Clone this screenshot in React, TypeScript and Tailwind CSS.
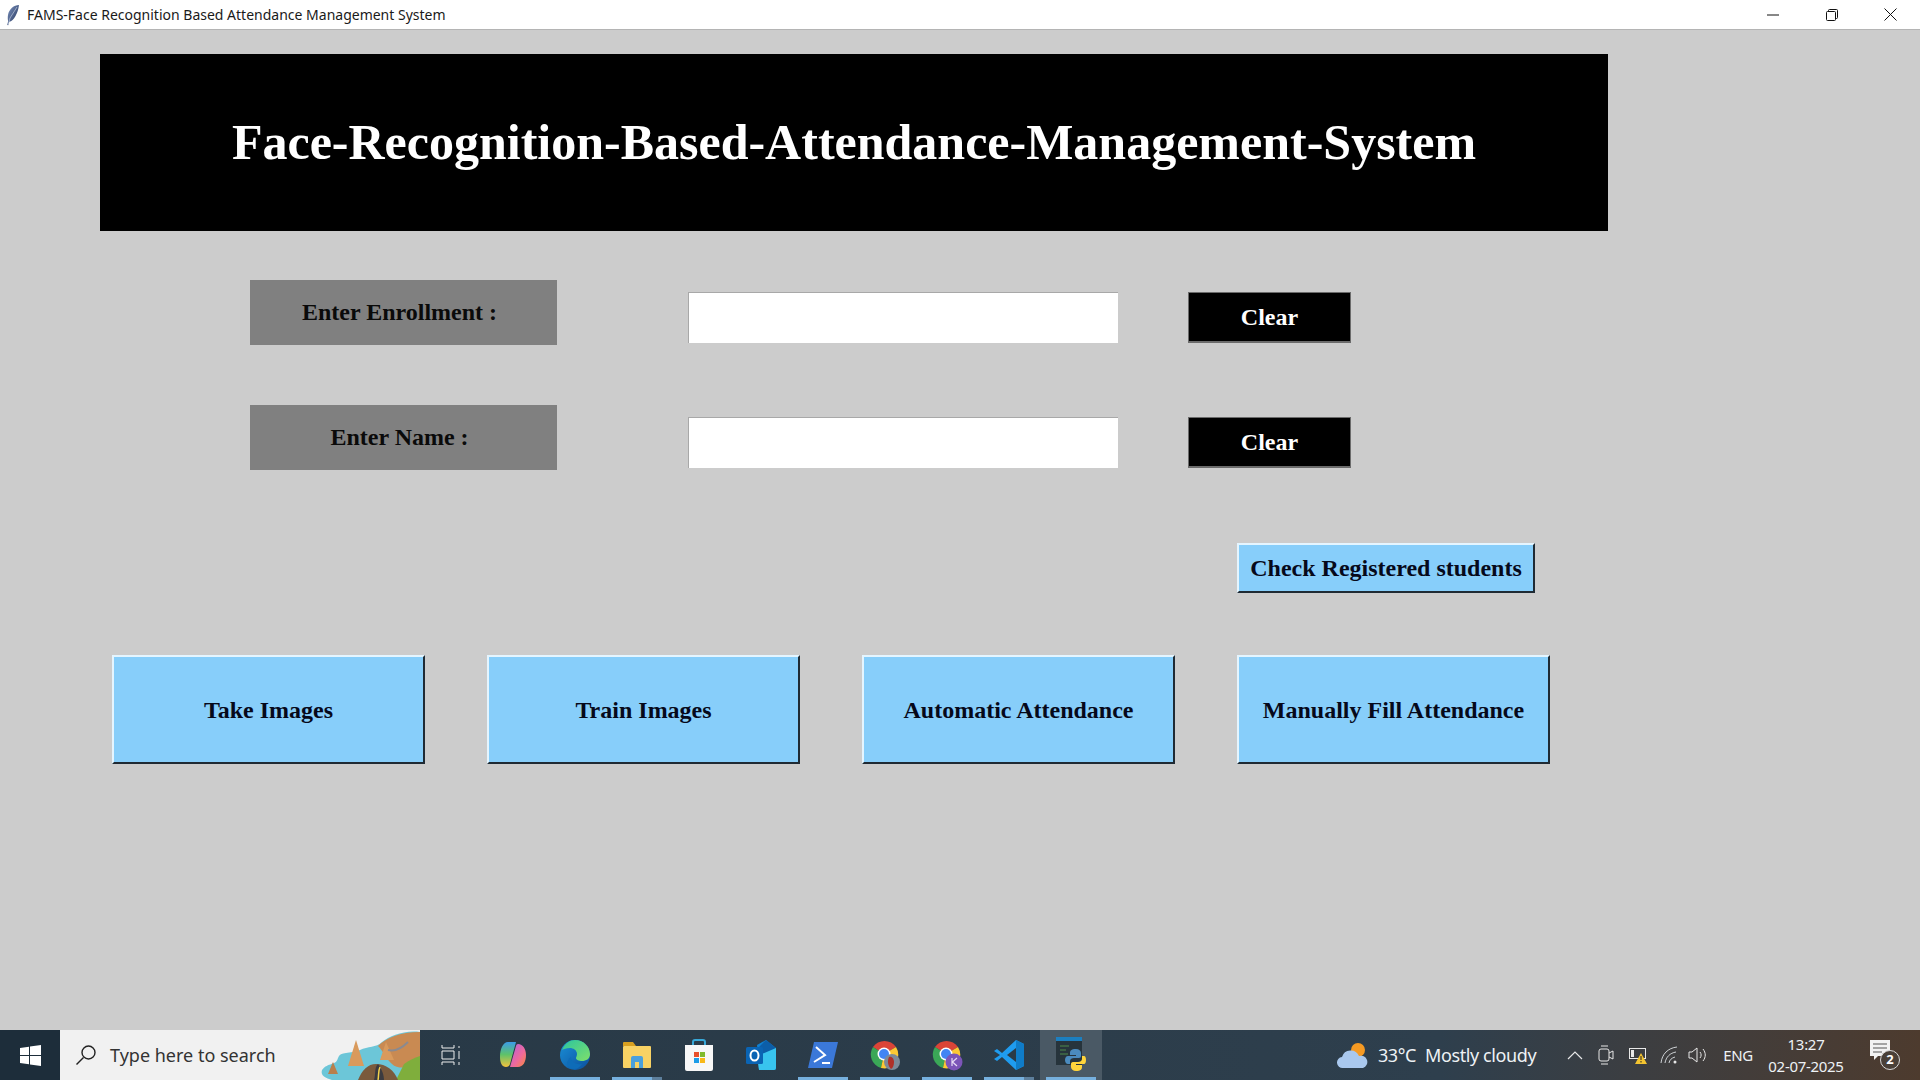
import { ReactNode } from "react";

function FeatherIcon() {
  return (
    <svg width="14" height="22" viewBox="0 0 14 22">
      <defs>
        <linearGradient id="feather" x1="0" y1="0" x2="1" y2="1">
          <stop offset="0" stopColor="#7f97c4" />
          <stop offset="1" stopColor="#1d2c52" />
        </linearGradient>
      </defs>
      <path d="M13 1C8 1 3 5 2 11c-.4 2.600-.3 4.500.2 6l-1 4 1 .2 1-3.400C8 17 12 9 13 1z" fill="url(#feather)" />
      <path d="M11 3 4 14 2.500 20" stroke="#cfd8ea" strokeWidth=".6" fill="none" />
    </svg>
  );
}

function TitleBar() {
  return (
    <div className="flex h-[30px] items-center bg-white border-b border-[#b4b4b4] pl-[6px]">
      <FeatherIcon />
      <span className="ml-[7px] text-[14px] text-[#1a1a1a] font-['Noto_Sans',sans-serif]">
        FAMS-Face Recognition Based Attendance Management System
      </span>
      <div className="ml-auto flex items-center text-black">
        <div className="flex w-[59px] justify-center">
          <svg width="12" height="12" viewBox="0 0 12 12"><path d="M0 6h12" stroke="#111" strokeWidth="1" /></svg>
        </div>
        <div className="flex w-[59px] justify-center">
          <svg width="12" height="12" viewBox="0 0 12 12" fill="none" stroke="#111" strokeWidth="1">
            <rect x=".5" y="2.500" width="9" height="9" rx="1" />
            <path d="M2.500 2.500V1.500a1 1 0 0 1 1-1h7a1 1 0 0 1 1 1v7a1 1 0 0 1-1 1h-1" />
          </svg>
        </div>
        <div className="flex w-[59px] justify-center">
          <svg width="13" height="13" viewBox="0 0 13 13"><path d="M.5.5l12 12M12.500.5l-12 12" stroke="#111" strokeWidth="1" fill="none" /></svg>
        </div>
      </div>
    </div>
  );
}

function FieldRow({ label, first }: { label: string; first?: boolean }) {
  return (
    <div className={first ? "ml-[150px] mt-[49px] flex items-start" : "ml-[150px] mt-[60px] flex items-start"}>
      <div className="flex h-[65px] w-[307px] items-center justify-center bg-[#808080] pb-[2px] pr-[8px] text-[24px] font-bold text-[#0a0a0a]">
        {label}
      </div>
      <div className="ml-[131px] mt-[12px] h-[51px] w-[430px] bg-white border-t border-l border-[#a8a8a8]" />
      <button className="ml-[70px] mt-[12px] h-[51px] w-[163px] bg-black border border-[#6b6b6b] border-b-2 text-[24px] font-bold text-white">
        Clear
      </button>
    </div>
  );
}

function ActionButton({ label }: { label: string }) {
  return (
    <button className="h-[109px] w-[313px] bg-[#87cefa] border-t-2 border-l-2 border-t-[#e4f5ff] border-l-[#e4f5ff] border-r-2 border-b-2 border-r-[#1f2a33] border-b-[#1f2a33] text-[24px] font-bold text-[#06091a]">
      {label}
    </button>
  );
}

function Main() {
  return (
    <div className="flex-1 bg-[#cccccc] pl-[100px] pt-[24px] font-['Liberation_Serif',serif]">
      <div className="flex h-[177px] w-[1508px] items-center justify-center bg-black text-[50px] font-bold text-white">
        Face-Recognition-Based-Attendance-Management-System
      </div>
      <FieldRow label="Enter Enrollment :" first />
      <FieldRow label="Enter Name :" />
      <button className="ml-[1137px] mt-[73px] block h-[50px] w-[298px] bg-[#87cefa] border-t-2 border-l-2 border-t-[#e4f5ff] border-l-[#e4f5ff] border-r-2 border-b-2 border-r-[#1f2a33] border-b-[#1f2a33] text-[24px] font-bold text-[#06091a]">
        Check Registered students
      </button>
      <div className="ml-[12px] mt-[62px] flex gap-[62px]">
        <ActionButton label="Take Images" />
        <ActionButton label="Train Images" />
        <ActionButton label="Automatic Attendance" />
        <ActionButton label="Manually Fill Attendance" />
      </div>
    </div>
  );
}

function SearchArt() {
  return (
    <svg width="100" height="50" viewBox="0 0 100 50" className="shrink-0">
      <path d="M2 40c6-8 14-4 16-12 2-7 12-4 22-8 8-4 16-2 22-8 8-6 22-12 38-10v48H12C6 48 0 46 2 40z" fill="#6cc6d8" />
      <path d="M58 16c8-8 22-14 42-14v30c-8 6-22 8-28 2-6-5-8-12-14-18z" fill="#c98a52" />
      <path d="M84 34c6-4 10-6 16-8v24H76z" fill="#7fae3c" />
      <path d="M28 36 36 10l8 26z" fill="#d99a5c" />
      <path d="M8 44l5-12 5 12z" fill="#b97f4c" />
      <path d="M38 50c4-10 10-16 18-16 10 0 18 6 22 16z" fill="#7a5a3c" />
      <path d="M54 50c2-6 0-12 4-16 3 4 6 10 6 16z" fill="#3b3b40" />
      <path d="M58 50c1-5 0-9 2-13" stroke="#f4d24a" strokeWidth="1.500" fill="none" />
      <path d="M60 30l6-18 8 18z" fill="#d99a5c" />
      <path d="M68 20c8 2 14-2 20-8" stroke="#8a8a90" strokeWidth="2" fill="none" />
    </svg>
  );
}

function TaskSlot({ children, bar, split, active }: { children: ReactNode; bar?: boolean; split?: boolean; active?: boolean }) {
  return (
    <div className={active ? "relative flex h-full w-[62px] items-center justify-center bg-[#4a5965]" : "relative flex h-full w-[62px] items-center justify-center"}>
      {children}
      {bar && (
        <div className="absolute bottom-0 left-[6px] right-[6px] flex h-[3px]">
          <div className="flex-1 bg-[#76b0de]" />
          {split && <div className="w-[10px] bg-[#5d7f9c]" />}
        </div>
      )}
    </div>
  );
}

function CopilotIcon() {
  return (
    <svg width="28" height="30" viewBox="0 0 28 30">
      <defs>
        <linearGradient id="cpA" x1="0" y1="0" x2="0" y2="1">
          <stop offset="0" stopColor="#3b9be8" />
          <stop offset=".5" stopColor="#5ec26a" />
          <stop offset="1" stopColor="#f5c23c" />
        </linearGradient>
        <linearGradient id="cpB" x1="0" y1="0" x2="1" y2="1">
          <stop offset="0" stopColor="#b05fe0" />
          <stop offset=".6" stopColor="#f06a9a" />
          <stop offset="1" stopColor="#f58a3c" />
        </linearGradient>
      </defs>
      <path d="M9 2h8l-6 22c-.5 2-2 3-4 3C3 27 1 23 1 17 1 9 4 2 9 2z" fill="url(#cpA)" />
      <path d="M19 4c5 0 8 5 8 11 0 7-3 12-8 12h-8l6-21c.3-1.300 1-2 2-2z" fill="url(#cpB)" />
    </svg>
  );
}

function EdgeIcon() {
  return (
    <svg width="32" height="32" viewBox="0 0 32 32">
      <defs>
        <linearGradient id="edA" x1="0" y1="0" x2="1" y2="1">
          <stop offset="0" stopColor="#2bc4a0" />
          <stop offset="1" stopColor="#7fe06a" />
        </linearGradient>
        <linearGradient id="edB" x1="0" y1="0" x2="1" y2="1">
          <stop offset="0" stopColor="#1a90d8" />
          <stop offset="1" stopColor="#0c4f9c" />
        </linearGradient>
      </defs>
      <circle cx="16" cy="16" r="15" fill="url(#edB)" />
      <path d="M3 11C6 4 11 1 16 1c9 0 15 7 15 14 0 5-4 7-8 7-3 0-6-1-6-3 0-1 1-2 1-4 0-4-4-6-7-6-4 0-6 1-8 2z" fill="url(#edA)" />
      <path d="M12 18c0 5 5 8 11 7-2 3-5 5-8 5-3 0-5-1-6-3-2-3 0-7 3-9z" fill="#0e6cb8" />
    </svg>
  );
}

function ExplorerIcon() {
  return (
    <svg width="30" height="28" viewBox="0 0 30 28">
      <path d="M1 2a1 1 0 0 1 1-1h9l3 4H1z" fill="#d8a020" />
      <rect x="1" y="5" width="28" height="22" rx="1" fill="#f8d264" />
      <path d="M9 27V17a2 2 0 0 1 2-2h8a2 2 0 0 1 2 2v10h-4v-6h-4v6z" fill="#4aa0dc" />
    </svg>
  );
}

function StoreIcon() {
  return (
    <svg width="30" height="34" viewBox="0 0 30 34">
      <path d="M9 8V4a2 2 0 0 1 2-2h8a2 2 0 0 1 2 2v4" fill="none" stroke="#38a8d8" strokeWidth="2" />
      <path d="M1 7h28v24a2 2 0 0 1-2 2H3a2 2 0 0 1-2-2z" fill="#f7f7f7" />
      <rect x="10" y="14" width="5" height="5" fill="#e8502c" />
      <rect x="16" y="14" width="5" height="5" fill="#7fba2c" />
      <rect x="10" y="20" width="5" height="5" fill="#1c9ce8" />
      <rect x="16" y="20" width="5" height="5" fill="#f8b818" />
    </svg>
  );
}

function OutlookIcon() {
  return (
    <svg width="32" height="32" viewBox="0 0 32 32">
      <path d="M12 6l9-5 10 8v20a2 2 0 0 1-2 2H14z" fill="#0f7fd0" />
      <path d="M21 1l10 8-10 7-9-6z" fill="#0c5ea8" />
      <path d="M12 17l19-8v20a2 2 0 0 1-2 2H14z" fill="#38c4ee" />
      <rect x="1" y="8" width="17" height="17" rx="1.500" fill="#0a64b4" />
      <ellipse cx="9.500" cy="16.500" rx="4" ry="5" fill="none" stroke="#fff" strokeWidth="2" />
    </svg>
  );
}

function PowerShellIcon() {
  return (
    <svg width="30" height="26" viewBox="0 0 30 26">
      <path d="M6 0h24l-6 26H0z" fill="#3b78d8" />
      <path d="M8 5l9 8-11 7" fill="none" stroke="#fff" strokeWidth="2" />
      <path d="M14 21h8" stroke="#fff" strokeWidth="2" />
    </svg>
  );
}

function ChromeBase() {
  return (
    <>
      <path d="M15 15 4 8A14 14 0 0 1 27 8z" fill="#db4437" />
      <path d="M15 15 4 8a14 14 0 0 0 8 21z" fill="#3aa757" />
      <path d="M15 15 12 29A14 14 0 0 0 27 8z" fill="#fcc934" />
      <circle cx="15" cy="15" r="6.500" fill="#fff" />
      <circle cx="15" cy="15" r="5" fill="#4285f4" />
    </>
  );
}

function ChromeProfileIcon() {
  return (
    <svg width="32" height="32" viewBox="0 0 32 32">
      <ChromeBase />
      <circle cx="23" cy="23" r="8" fill="#7d8a98" />
      <path d="M20 18c3-1 5 2 5 5s-1 6-3 7c-3-3-4-8-2-12z" fill="#b03028" />
    </svg>
  );
}

function ChromeKIcon() {
  return (
    <svg width="32" height="32" viewBox="0 0 32 32">
      <ChromeBase />
      <circle cx="23" cy="23" r="8.500" fill="#7c55b8" />
      <path d="M21 19v8M26 19l-4.500 4 4.500 4" fill="none" stroke="#e8ddf5" strokeWidth="1.200" />
    </svg>
  );
}

function VsCodeIcon() {
  return (
    <svg width="32" height="32" viewBox="0 0 32 32">
      <path d="M23 1l8 4v22l-8 4L9 18l-5 4-3-2 6-4-6-4 3-2 5 4z" fill="#1f9cf0" />
      <path d="M23 9v14l-9-7z" fill="#2a3a47" />
      <path d="M23 1l8 4v22l-8 4z" fill="#0f7cc8" />
    </svg>
  );
}

function PythonIcon() {
  return (
    <svg width="30" height="36" viewBox="0 0 30 36">
      <rect x="0" y="0" width="26" height="28" fill="#27343c" />
      <rect x="0" y="0" width="26" height="4" fill="#1c7fc0" />
      <path d="M4 9h9M4 13h6M4 17h8" stroke="#4f8a4a" strokeWidth="1" />
      <path d="M20 12c-5 0-6 2-6 4v2h6v1h-8c-2 0-3 2-3 4s1 4 3 4h2v-3c0-2 2-3 4-3h5c1.500 0 2-1 2-2v-3c0-2-2-4-5-4z" fill="#4b8bbe" />
      <path d="M20 34c5 0 6-2 6-4v-2h-6v-1h8c1.500 0 2-2 2-4s-.5-4-2-4h-2v3c0 2-2 3-4 3h-5c-1.500 0-2 1-2 2v3c0 2 2 4 5 4z" fill="#ffd43b" />
    </svg>
  );
}

function Tray() {
  return (
    <div className="ml-auto flex h-full items-center text-white font-['Noto_Sans',sans-serif]">
      <svg width="32" height="28" viewBox="0 0 32 28" className="mr-[9px]">
        <circle cx="21" cy="9" r="7" fill="#f59a23" />
        <path d="M6 27a5.500 5.500 0 0 1-1-11 9 9 0 0 1 17-1 6 6 0 0 1 4 12z" fill="#a9c8ee" />
      </svg>
      <span className="text-[18px] tracking-[-0.4px] text-[#eef2f5]">33°C</span>
      <span className="ml-[9px] text-[18px] tracking-[-0.4px] text-[#eef2f5]">Mostly cloudy</span>
      <svg width="16" height="10" viewBox="0 0 16 10" className="ml-[31px]"><path d="M1 9l7-7 7 7" fill="none" stroke="#e8e8e8" strokeWidth="1.200" /></svg>
      <svg width="16" height="22" viewBox="0 0 16 22" className="ml-[15px]" fill="none" stroke="#e8e8e8" strokeWidth="1">
        <rect x="1" y="5" width="10" height="12" rx="2" />
        <path d="M11 9l4-2v8l-4-2M3 2h7M3 20h7" />
      </svg>
      <svg width="20" height="20" viewBox="0 0 20 20" className="ml-[15px]">
        <rect x="0.500" y="3.500" width="16" height="10" fill="none" stroke="#e8e8e8" />
        <rect x="2" y="5" width="3" height="7" fill="#e8e8e8" />
        <path d="M12 8l6 11H6z" fill="#f4c430" />
        <path d="M12 11v4M12 16v1.500" stroke="#222" strokeWidth="1" />
      </svg>
      <svg width="18" height="18" viewBox="0 0 18 18" className="ml-[11px]" fill="none" stroke="#cfd3d6" strokeWidth="1">
        <path d="M1 17C2 8 8 2 17 1M5 17c1-6 5-10 11-11M9 17c.5-3 2.500-5 6-6" />
        <circle cx="15" cy="16" r="1.500" fill="#e8e8e8" stroke="none" />
      </svg>
      <svg width="20" height="18" viewBox="0 0 20 18" className="ml-[10px]" fill="none" stroke="#e8e8e8" strokeWidth="1">
        <path d="M1 6h3l5-4v14l-5-4H1zM12 6c1.500 2 1.500 4 0 6M15 3c3 4 3 8 0 12" />
      </svg>
      <span className="ml-[15px] text-[15px] tracking-[-0.3px] text-[#eef2f5]">ENG</span>
      <div className="ml-[11px] flex w-[84px] flex-col items-center text-[15px] leading-[22px] tracking-[-0.3px] text-[#eef2f5]">
        <span>13:27</span>
        <span>02-07-2025</span>
      </div>
      <div className="relative ml-[22px] mr-[18px] h-[34px] w-[32px]">
        <svg width="22" height="22" viewBox="0 0 22 22" className="absolute left-0 top-[2px]">
          <path d="M0 0h20v16H8l-4 4v-4H0z" fill="#f2f2f2" />
          <path d="M3 4h14M3 8h14M3 12h9" stroke="#555" strokeWidth="1" />
        </svg>
        <div className="absolute left-[10px] top-[12px] flex h-[20px] w-[20px] items-center justify-center rounded-full border border-[#d8d8d8] bg-[#4a4038] text-[13px] font-bold">
          2
        </div>
      </div>
    </div>
  );
}

function Taskbar() {
  return (
    <div className="flex h-[50px] bg-gradient-to-r from-[#263744] via-[#2e3f4d] via-75% to-[#4d3b2e]">
      <div className="flex h-full w-[60px] items-center justify-center bg-[#1d2d3a]">
        <svg width="21" height="21" viewBox="0 0 21 21" fill="#fff">
          <path d="M0 3l9-1.300V10H0zM10 1.500 21 0v10H10zM0 11h9v8.300L0 18zM10 11h11v10l-11-1.500z" />
        </svg>
      </div>
      <div className="flex h-full w-[360px] items-center overflow-hidden bg-[#f1f1f1] pl-[15px] font-['Noto_Sans',sans-serif]">
        <svg width="22" height="22" viewBox="0 0 22 22" fill="none" stroke="#222" strokeWidth="1.400" className="shrink-0">
          <circle cx="13.500" cy="8.500" r="6.500" />
          <path d="M8.500 13.500 1.500 20.500" />
        </svg>
        <span className="ml-[13px] whitespace-nowrap text-[18px] text-[#333]">Type here to search</span>
        <div className="ml-auto"><SearchArt /></div>
      </div>
      <TaskSlot>
        <svg width="20" height="20" viewBox="0 0 20 20" fill="none" stroke="#eee" strokeWidth="1">
          <path d="M1 0v3h12V0M1 20v-3h12v3M1 6h12v8H1zM18 1v2M18 6v8M18 17v3" />
        </svg>
      </TaskSlot>
      <TaskSlot><CopilotIcon /></TaskSlot>
      <TaskSlot bar><EdgeIcon /></TaskSlot>
      <TaskSlot bar split><ExplorerIcon /></TaskSlot>
      <TaskSlot><StoreIcon /></TaskSlot>
      <TaskSlot><OutlookIcon /></TaskSlot>
      <TaskSlot bar><PowerShellIcon /></TaskSlot>
      <TaskSlot bar><ChromeProfileIcon /></TaskSlot>
      <TaskSlot bar><ChromeKIcon /></TaskSlot>
      <TaskSlot bar split><VsCodeIcon /></TaskSlot>
      <TaskSlot bar active><PythonIcon /></TaskSlot>
      <Tray />
    </div>
  );
}

export default function App() {
  return (
    <div className="flex h-[1080px] w-[1920px] flex-col overflow-hidden">
      <TitleBar />
      <Main />
      <Taskbar />
    </div>
  );
}
